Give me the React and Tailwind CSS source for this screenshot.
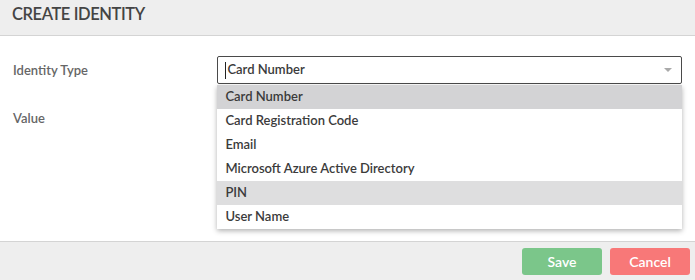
import React from "react";

const options = [
  "Card Number",
  "Card Registration Code",
  "Email",
  "Microsoft Azure Active Directory",
  "PIN",
  "User Name",
];

export default function App() {
  return (
    <div
      className="w-[695px] h-[280px] flex flex-col bg-white text-[#333] overflow-hidden"
      style={{ fontFamily: "Lato, 'Open Sans', sans-serif" }}
    >
      {/* Header */}
      <div className="h-[36px] shrink-0 bg-[#eeeeee] border-b border-[#d4d4d4] flex items-start pt-[2px] px-3">
        <h2 className="text-[16.5px] leading-[24px] text-[#444] font-semibold tracking-tight">CREATE IDENTITY</h2>
      </div>

      {/* Body */}
      <div className="flex-1 pt-[20px] px-[13px] flex flex-col gap-[23px]">
        <div className="flex items-start">
          <label className="w-[205px] h-[30px] flex items-center text-[13px] text-[#666] font-semibold">Identity Type</label>
          <div className="relative w-[466px]">
            <div className="h-[28px] border border-[#4a4a4a] rounded-[2px] flex items-center pl-[7px] pr-[9px]">
              <span className="w-px h-[17px] bg-[#222] mr-px" />
              <span className="text-[13px] text-[#3b3b3b] font-semibold">Card Number</span>
              <span className="ml-auto w-0 h-0 border-l-[4px] border-r-[4px] border-t-[4px] border-l-transparent border-r-transparent border-t-[#aaa]" />
            </div>
            <ul className="absolute left-0 right-0 top-[29px] bg-white shadow-[0_2px_5px_rgba(0,0,0,0.3)] z-10">
              {options.map((o, i) => (
                <li
                  key={o}
                  className={
                    "h-[24px] flex items-center px-[8px] text-[13px] font-semibold text-[#3b3b3b] " +
                    (i === 0 ? "bg-[#d3d3d5]" : i === 4 ? "bg-[#dededf]" : "")
                  }
                >
                  {o}
                </li>
              ))}
            </ul>
          </div>
        </div>
        <div className="flex items-center">
          <label className="w-[205px] text-[13px] text-[#666] font-semibold">Value</label>
        </div>
      </div>

      {/* Footer */}
      <div className="h-[39px] shrink-0 bg-[#eeeeee] border-t border-[#d4d4d4] flex items-center justify-end gap-2 pr-[5px]">
        <button className="w-[80px] h-[27px] rounded-[3px] bg-[#7bc68a] text-white text-[14px] font-semibold">Save</button>
        <button className="w-[80px] h-[27px] rounded-[3px] bg-[#f87878] text-white text-[14px] font-semibold">Cancel</button>
      </div>
    </div>
  );
}
